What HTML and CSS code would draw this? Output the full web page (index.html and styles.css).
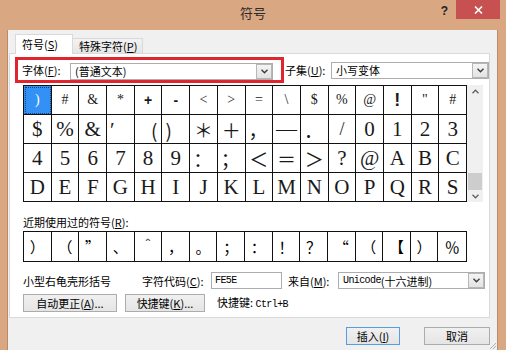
FILE: index.html
```html
<!DOCTYPE html>
<html lang="zh-CN">
<head>
    <meta charset="UTF-8">
    <meta name="viewport" content="width=device-width, initial-scale=1.0">
    <title>符号</title>
    <link rel="stylesheet" href="styles.css">
</head>
<body>

<div class="window">
    <div class="titlebar">
        <span></span>
        <span class="title">符号</span>
        <div class="controls">
            <span class="help">?</span>
            <span class="close">
                <svg width="9" height="8" viewBox="0 0 9 8"><path d="M1 0.5 L8 7.5 M8 0.5 L1 7.5" stroke="#fff" stroke-width="1.6"/></svg>
            </span>
        </div>
    </div>

    <div class="client">
        <div class="tabs">
            <div class="tab active">符号(<u>S</u>)</div>
            <div class="tab">特殊字符(<u>P</u>)</div>
        </div>

        <div class="panel">
            <div class="font-row">
                <div class="marked">
                    <label>字体(<u>F</u>):</label>
                    <div class="combo font-combo">
                        <span>(普通文本)</span>
                        <i class="arrow"><svg width="7" height="5" viewBox="0 0 7 5"><path d="M0.5 0.8 L3.5 3.8 L6.5 0.8" fill="none" stroke="#3c3c3c" stroke-width="1.4"/></svg></i>
                    </div>
                </div>
                <label class="subset-label">子集(<u>U</u>):</label>
                <div class="combo subset-combo">
                    <span>小写变体</span>
                    <i class="arrow"><svg width="7" height="5" viewBox="0 0 7 5"><path d="M0.5 0.8 L3.5 3.8 L6.5 0.8" fill="none" stroke="#3c3c3c" stroke-width="1.4"/></svg></i>
                </div>
            </div>

            <div class="grid-wrap">
                <div class="grid">
                    <span class="sm sel"><b>)</b></span>
                    <span class="sm">#</span>
                    <span class="sm">&amp;</span>
                    <span class="sm">*</span>
                    <span class="sm bold">+</span>
                    <span class="sm bold">-</span>
                    <span class="sm">&lt;</span>
                    <span class="sm">&gt;</span>
                    <span class="sm">=</span>
                    <span class="sm">\</span>
                    <span class="sm">$</span>
                    <span class="sm">%</span>
                    <span class="sm">@</span>
                    <span class="sm bold tall">!</span>
                    <span class="sm">"</span>
                    <span class="sm">#</span>

                    <span>$</span>
                    <span>%</span>
                    <span>&amp;</span>
                    <span class="l top">′</span>
                    <span class="r cjk">(</span>
                    <span class="l cjk">)</span>
                    <span class="cjk">＊</span>
                    <span class="cjk">＋</span>
                    <span class="l cjk">，</span>
                    <span class="dash">—</span>
                    <span class="l cjk">．</span>
                    <span class="slash">/</span>
                    <span>0</span>
                    <span>1</span>
                    <span>2</span>
                    <span>3</span>

                    <span>4</span>
                    <span>5</span>
                    <span>6</span>
                    <span>7</span>
                    <span>8</span>
                    <span>9</span>
                    <span class="l cjk">：</span>
                    <span class="l cjk">；</span>
                    <span class="cjk">＜</span>
                    <span class="cjk">＝</span>
                    <span class="cjk">＞</span>
                    <span>?</span>
                    <span>@</span>
                    <span>A</span>
                    <span>B</span>
                    <span>C</span>

                    <span>D</span>
                    <span>E</span>
                    <span>F</span>
                    <span>G</span>
                    <span>H</span>
                    <span>I</span>
                    <span>J</span>
                    <span>K</span>
                    <span>L</span>
                    <span>M</span>
                    <span>N</span>
                    <span>O</span>
                    <span>P</span>
                    <span>Q</span>
                    <span>R</span>
                    <span>S</span>
                </div>
                <div class="scrollbar">
                    <i class="sb-btn"><svg width="7" height="5" viewBox="0 0 7 5"><path d="M0.5 4.2 L3.5 1.2 L6.5 4.2" fill="none" stroke="#606060" stroke-width="1.3"/></svg></i>
                    <div class="sb-track"><div class="sb-thumb"></div></div>
                    <i class="sb-btn"><svg width="7" height="5" viewBox="0 0 7 5"><path d="M0.5 0.8 L3.5 3.8 L6.5 0.8" fill="none" stroke="#606060" stroke-width="1.3"/></svg></i>
                </div>
            </div>

            <div class="recent-label">近期使用过的符号(<u>R</u>):</div>
            <div class="recent">
                <span>）</span>
                <span>（</span>
                <span>”</span>
                <span>、</span>
                <span>＾</span>
                <span>，</span>
                <span>。</span>
                <span>；</span>
                <span>：</span>
                <span>！</span>
                <span>？</span>
                <span>“</span>
                <span>（</span>
                <span>【</span>
                <span>）</span>
                <span>％</span>
            </div>

            <div class="info-row">
                <span class="char-name">小型右龟壳形括号</span>
                <label class="code-label">字符代码(<u>C</u>):</label>
                <div class="code-input">FE5E</div>
                <label class="from-label">来自(<u>M</u>):</label>
                <div class="combo from-combo">
                    <span class="mono">Unicode</span><span>(十六进制)</span>
                    <i class="arrow"><svg width="7" height="5" viewBox="0 0 7 5"><path d="M0.5 0.8 L3.5 3.8 L6.5 0.8" fill="none" stroke="#3c3c3c" stroke-width="1.4"/></svg></i>
                </div>
            </div>

            <div class="button-row">
                <button class="btn autocorrect">自动更正(<u>A</u>)...</button>
                <button class="btn shortcut">快捷键(<u>K</u>)...</button>
                <span class="shortcut-text">快捷键: <span class="mono">Ctrl+B</span></span>
            </div>
        </div>

        <div class="footer">
            <button class="btn default">插入(<u>I</u>)</button>
            <button class="btn cancel">取消</button>
            <svg class="grip" width="10" height="10" viewBox="0 0 10 10"><path d="M9 3 L3 9 M9 6 L6 9" stroke="#b0b0b0" stroke-width="1"/></svg>
        </div>
    </div>
</div>

</body>
</html>
```

FILE: styles.css
```css
body {
    margin: 0;
    font-family: "Noto Sans CJK SC", sans-serif;
    font-size: 11px;
    color: #000;
}
u {
    text-decoration: underline;
}
.window {
    width: 506px;
    height: 350px;
    background: #d9a782;
    display: flex;
    flex-direction: column;
    overflow: hidden;
}
.titlebar {
    height: 30px;
    display: grid;
    grid-template-columns: 1fr auto 1fr;
    align-items: start;
}
.title {
    font-size: 13px;
    line-height: 26px;
    color: #2b2b2b;
}
.controls {
    justify-self: end;
    display: flex;
    align-items: flex-start;
}
.help {
    font-family: "Liberation Sans", sans-serif;
    font-weight: bold;
    font-size: 12px;
    line-height: 22px;
    color: #222;
    margin-right: 8px;
}
.close {
    width: 44px;
    height: 19px;
    background: #c75050;
    margin-right: 6px;
    display: flex;
    align-items: center;
    justify-content: center;
}
.client {
    flex: 1;
    margin: 0 8px 0 7px;
    border-left: 1px solid #b98c68;
    border-right: 1px solid #b98c68;
    background: #f0f0f0;
    padding: 0 7px 0 1px;
    display: flex;
    flex-direction: column;
}
.tabs {
    display: flex;
    align-items: flex-end;
    padding: 5px 0 0 6px;
    height: 18px;
}
.tab {
    height: 14px;
    line-height: 14px;
    padding: 0 5px 0 6px;
    border: 1px solid #d9d9d9;
    border-bottom: none;
    border-left: none;
    background: linear-gradient(#f2f2f2, #e6e6e6);
    white-space: nowrap;
}
.tab.active {
    height: 19px;
    line-height: 18px;
    width: 44px;
    padding: 0 6px;
    background: #fff;
    border-left: 1px solid #d9d9d9;
    margin-bottom: -1px;
    position: relative;
    z-index: 1;
}
.panel {
    height: 263px;
    background: #fff;
    border: 1px solid #d9d9d9;
}
.font-row {
    display: flex;
    align-items: center;
    margin: 3px 0 0 5px;
}
.marked {
    width: 259px;
    height: 20px;
    border: 3px solid #e0252f;
    display: flex;
    align-items: center;
    padding-left: 4px;
    box-sizing: content-box;
}
.marked label {
    width: 48px;
    line-height: 14px;
}
.combo {
    height: 17px;
    box-sizing: border-box;
    border: 1px solid #abadb3;
    background: #fff;
    display: flex;
    align-items: center;
    padding-left: 4px;
    line-height: 14px;
    white-space: nowrap;
}
.combo .arrow {
    margin-left: auto;
    width: 16px;
    height: 15px;
    box-sizing: border-box;
    border: 1px solid #b7b7b7;
    background: linear-gradient(#f4f4f4, #e3e3e3);
    display: flex;
    align-items: center;
    justify-content: center;
}
.font-combo {
    width: 203px;
    margin-top: 2px;
}
.subset-label {
    margin-left: 1px;
    width: 46px;
    line-height: 14px;
}
.subset-combo {
    width: 158px;
}
.grid-wrap {
    display: flex;
    margin: 2px 0 0 13px;
}
.grid {
    width: 444px;
    display: grid;
    grid-template-columns: repeat(16, 1fr);
    grid-auto-rows: 29px;
    border-left: 1px solid #111;
    border-top: 1px solid #111;
    box-sizing: border-box;
    font-family: "Liberation Serif", "Noto Sans CJK SC", serif;
    font-size: 21px;
}
.grid span {
    border-right: 1px solid #111;
    border-bottom: 1px solid #111;
    display: flex;
    align-items: center;
    justify-content: center;
    line-height: 1;
    overflow: hidden;
    color: #1a1a1a;
}
.grid .sm {
    font-size: 14px;
}
.grid .bold {
    font-weight: bold;
    font-family: "Liberation Sans", sans-serif;
}
.grid .tall {
    font-size: 18px;
}
.grid .sel {
    background: #3390f5;
    color: #fff;
    outline: 1px dotted #1d3f6b;
    outline-offset: -2px;
}
.grid .sel b {
    font-weight: normal;
}
.grid .l {
    justify-content: flex-start;
    padding-left: 3px;
}
.grid .r {
    justify-content: flex-end;
    padding-right: 4px;
}
.grid .top {
    align-items: flex-start;
    padding-top: 5px;
}
.grid .cjk {
    font-family: "Noto Sans CJK SC", sans-serif;
    font-size: 19px;
}
.grid .slash {
    font-size: 18px;
}
.scrollbar {
    width: 16px;
    background: #f0f0f0;
    display: flex;
    flex-direction: column;
}
.sb-btn {
    height: 12px;
    display: flex;
    align-items: center;
    justify-content: center;
}
.sb-track {
    flex: 1;
    display: flex;
    flex-direction: column;
    justify-content: flex-end;
    padding: 0 1px;
}
.sb-thumb {
    height: 17px;
    background: #cdcdcd;
}
.recent-label {
    margin: 13px 0 0 13px;
    line-height: 14px;
}
.recent {
    width: 444px;
    margin: 2px 0 0 13px;
    display: grid;
    grid-template-columns: repeat(16, 1fr);
    height: 31px;
    box-sizing: border-box;
    border: 1px solid #111;
    font-size: 15px;
}
.recent span {
    border-right: 1px solid #111;
    display: flex;
    align-items: center;
    justify-content: center;
    line-height: 1;
}
.recent span:last-child {
    border-right: none;
}
.info-row {
    display: flex;
    align-items: center;
    margin: 10px 0 0 13px;
    height: 17px;
    line-height: 14px;
}
.char-name {
    width: 119px;
}
.code-label {
    width: 69px;
}
.code-input {
    width: 71px;
    height: 17px;
    box-sizing: border-box;
    border: 1px solid #abadb3;
    padding-left: 3px;
    font-family: "Liberation Mono", monospace;
    font-size: 10px;
    letter-spacing: -0.6px;
    line-height: 15px;
}
.from-label {
    margin-left: 6px;
    width: 50px;
}
.from-combo {
    width: 147px;
}
.mono {
    font-family: "Liberation Mono", monospace;
    font-size: 10px;
    letter-spacing: -0.6px;
}
.button-row {
    display: flex;
    align-items: center;
    margin: 5px 0 0 13px;
}
.btn {
    height: 18px;
    box-sizing: border-box;
    border: 1px solid #acacac;
    background: linear-gradient(#f0f0f0, #e5e5e5);
    font-family: "Noto Sans CJK SC", sans-serif;
    font-size: 11px;
    line-height: 14px;
    padding: 0;
    color: #000;
}
.autocorrect {
    width: 94px;
}
.shortcut {
    width: 80px;
    margin-left: 8px;
}
.shortcut-text {
    margin-left: 12px;
    line-height: 14px;
}
.footer {
    display: flex;
    align-items: flex-start;
    justify-content: flex-end;
    padding-top: 9px;
    flex: 1;
    margin-right: -7px;
}
.default {
    width: 54px;
    border-color: #569de5;
}
.cancel {
    width: 66px;
    margin-left: 24px;
}
.grip {
    align-self: flex-end;
    margin-left: -3px;
}
```
